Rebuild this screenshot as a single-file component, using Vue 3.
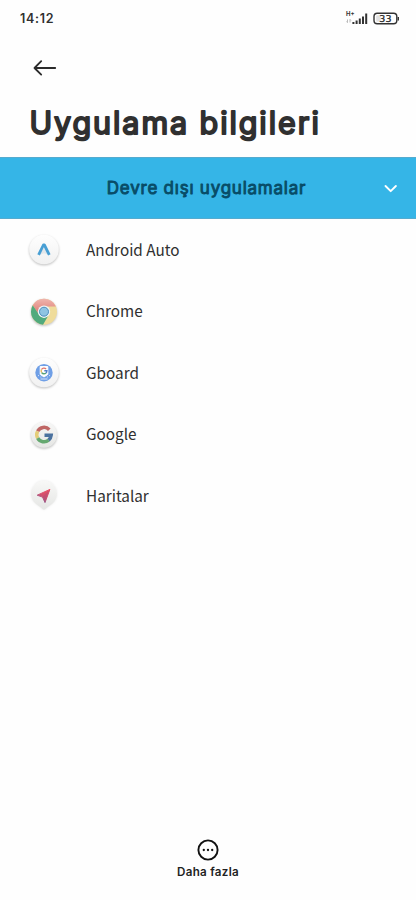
<script setup>
const apps = [
  { id: 'auto', name: 'Android Auto' },
  { id: 'chrome', name: 'Chrome' },
  { id: 'gboard', name: 'Gboard' },
  { id: 'google', name: 'Google' },
  { id: 'maps', name: 'Haritalar' },
]
</script>

<template>
  <div class="screen">
    <header class="status">
      <span class="time">14:12</span>
      <svg class="indicators" width="56" height="16" viewBox="0 0 56 16">
        <text x="2" y="5.8" class="net">H+</text>
        <path d="M3.5 9.5v3M2.5 11.5l1 1.2M6 12.5v-3M7 10.5l-1-1.2" stroke="#aaa" stroke-width=".8" fill="none" />
        <path d="M9.4 12v2M12.6 10.6v3.4M15.8 8.6V14M19 6.4V14M22.2 3.6V14" stroke="#333" stroke-width="2" stroke-linecap="butt" />
        <rect x="30" y="3.2" width="22.8" height="10.6" rx="3.2" fill="#fff" stroke="#333" stroke-width="1.4" />
        <rect x="32.2" y="5.2" width="4.5" height="6.6" rx="1" fill="#e2e2e2" />
        <path d="M54.3 7v3.4" stroke="#333" stroke-width="1.4" />
        <text x="41.4" y="11.9" text-anchor="middle" class="level">33</text>
      </svg>
    </header>

    <nav class="nav">
      <svg width="24" height="18" viewBox="0 0 24 18" fill="none" stroke="#2b2b2b" stroke-width="1.8" stroke-linecap="round" stroke-linejoin="round">
        <path d="M22.2 9H1.5M8.2 2.2L1.5 9l6.7 6.6" />
      </svg>
    </nav>

    <svg class="title" width="416" height="58" viewBox="0 0 416 58">
      <text x="29.4" y="35.4" textLength="289.5">Uygulama bilgileri</text>
    </svg>

    <div class="banner">
      <svg width="416" height="60" viewBox="0 0 416 60">
        <text x="106.8" y="36.4" textLength="198.6">Devre dışı uygulamalar</text>
        <path d="M385.5 28l5.2 5.2 5.2-5.2" fill="none" stroke="#fff" stroke-width="1.9" stroke-linecap="round" stroke-linejoin="round" />
      </svg>
    </div>

    <ul class="apps">
      <li v-for="app in apps" :key="app.id">
        <svg class="icon" width="36" height="36" viewBox="0 0 36 36">
          <defs>
            <linearGradient id="disc" x1="0" y1="0" x2="0" y2="1">
              <stop offset="0" stop-color="#fefefe" /><stop offset="1" stop-color="#f1f1f1" />
            </linearGradient>
            <linearGradient id="tile" x1="0" y1="0" x2="0" y2="1">
              <stop offset="0" stop-color="#f8f8f7" /><stop offset="1" stop-color="#e5e6e4" />
            </linearGradient>
            <linearGradient id="arrow" x1="1" y1="0" x2="0.3" y2="1">
              <stop offset="0" stop-color="#ed5064" /><stop offset=".6" stop-color="#d3506d" /><stop offset="1" stop-color="#7b68a4" />
            </linearGradient>
            <linearGradient id="red" x1="0" y1="0" x2="0" y2="1">
              <stop offset="0" stop-color="#efb5ae" /><stop offset="1" stop-color="#dc776f" />
            </linearGradient>
          </defs>
          <g v-if="app.id === 'auto'">
            <circle class="shadow" cx="18" cy="17.5" r="14.8" fill="url(#disc)" />
            <path d="M18 15.5l5 7.4-5-1.7-5 1.7z" fill="#e3e7ea" />
            <path d="M12.6 22.8L17.4 13h1l4.9 9.8" fill="none" stroke="#489fd4" stroke-width="2.8" stroke-linejoin="round" />
          </g>
          <g v-else-if="app.id === 'chrome'" class="shadow" transform="translate(0 .7)">
            <circle cx="18" cy="18" r="13" fill="#efdc9b" />
            <path d="M6.74 11.5A13 13 0 0 1 29.9 12.8H18a5.8 5.8 0 0 0-5 8.1z" fill="url(#red)" />
            <path d="M6.74 11.5A13 13 0 0 0 17 31l6-10.1a5.8 5.8 0 0 1-10 0z" fill="#51aa7d" />
            <circle cx="18" cy="18" r="6.2" fill="#edf4f6" />
            <circle cx="18" cy="18" r="4.5" fill="#8fc4e2" stroke="#3f83b6" stroke-width=".9" />
          </g>
          <g v-else-if="app.id === 'gboard'">
            <circle class="shadow" cx="18" cy="17.5" r="14.8" fill="url(#disc)" />
            <circle cx="18" cy="17.7" r="8.7" fill="#6f9fe6" />
            <path d="M14.2 11.6h7.6v7.8L18 22l-3.8-2.6z" fill="#fff" stroke="#fff" stroke-linejoin="round" />
            <g fill="none" stroke-width="1.4">
              <path d="M20.1 13.9a3 3 0 0 0-4.6.6" stroke="#df756d" />
              <path d="M15.5 14.5a3 3 0 0 0 .2 3.2" stroke="#e7b958" />
              <path d="M15.7 17.7a3 3 0 0 0 4.3.2" stroke="#59a477" />
              <path d="M20 17.9a3 3 0 0 0 .9-2.1h-2.6" stroke="#527fc7" />
            </g>
            <path d="M12 20.6h1M14.4 22h1M20.8 22h1M23 20.6h1M14.5 24h7" stroke="#d5e3fa" stroke-width="1" />
          </g>
          <g v-else-if="app.id === 'google'" transform="translate(0 .7)">
            <circle class="shadow" cx="18" cy="18" r="13" fill="url(#tile)" />
            <g fill="none" stroke-width="3.5">
              <path d="M23.3 13a7.2 7.2 0 0 0-11.7 1.6" stroke="#bf6664" />
              <path d="M11.6 14.6a7.2 7.2 0 0 0 .1 6.8" stroke="#e4cd78" />
              <path d="M11.7 21.4a7.2 7.2 0 0 0 10.9 2" stroke="#65a870" />
              <path d="M22.6 23.4a7.2 7.2 0 0 0 2.6-4.9H18.5" stroke="#4a719e" />
            </g>
          </g>
          <g v-else>
            <path class="soft" d="M18 31.8c-1.2 0-2-1.4-3.2-2.3-1.7-1.2-3.3-2.2-4.8-3.5A13 13 0 1 1 26 26c-1.5 1.3-3.1 2.3-4.8 3.5-1.2.9-2 2.3-3.2 2.3z" fill="url(#tile)" />
            <path d="M23.9 11.4L11.2 17.2l5.3 1.9 2.5 5.5z" fill="url(#arrow)" stroke="url(#arrow)" stroke-linejoin="round" />
            <path d="M23.9 11.4l-7.4 7.7 2.5 5.5z" fill="#a44f78" opacity=".4" />
          </g>
        </svg>
        <span>{{ app.name }}</span>
      </li>
    </ul>

    <footer class="more">
      <svg width="24" height="24" viewBox="0 0 24 24">
        <circle cx="12" cy="12" r="9.6" fill="none" stroke="#111" stroke-width="1.9" />
        <circle cx="7.8" cy="12" r="1.15" fill="#111" /><circle cx="12" cy="12" r="1.15" fill="#111" /><circle cx="16.2" cy="12" r="1.15" fill="#111" />
      </svg>
      <span>Daha fazla</span>
    </footer>
  </div>
</template>

<style>
body { margin: 0; background: #fefefe; }
</style>

<style scoped>
.screen { width: 416px; height: 900px; display: flex; flex-direction: column; overflow: hidden; background: #fefefe; color: #303030; font-family: "Noto Sans", sans-serif; }
.status { height: 37px; box-sizing: border-box; padding: 0 16px 0 20px; display: flex; align-items: center; justify-content: space-between; }
.time { font: 600 12.5px Inter, sans-serif; letter-spacing: .7px; }
.indicators { display: block; margin-bottom: 1px; }
.net { font: 700 6px Inter, sans-serif; fill: #333; }
.level { font: 500 9.5px "DejaVu Sans", sans-serif; fill: #222; stroke: #222; stroke-width: .25; }
.nav { height: 62px; box-sizing: border-box; padding: 22px 0 0 33px; }
.nav svg { display: block; }
.title { display: block; flex: none; }
.title text { font: 400 30.5px Inter, sans-serif; fill: #303030; stroke: #303030; stroke-width: 1.9; stroke-linejoin: round; }
.banner { height: 62px; box-sizing: border-box; background: #35b5e7; border-top: 1px solid #55abcf; border-bottom: 1px solid #55abcf; }
.banner svg { display: block; }
.banner text { font: 400 17px Inter, sans-serif; fill: #084c67; stroke: #084c67; stroke-width: .9; stroke-linejoin: round; }
.apps { list-style: none; margin: 0; padding: 0; flex: 1; }
.apps li { height: 61.5px; display: flex; align-items: center; gap: 24px; padding-left: 26px; box-sizing: border-box; font: 400 15.3px "Noto Sans CJK SC", sans-serif; color: #303030; }
.apps li span { padding-bottom: 2px; }
.icon { flex: none; overflow: visible; }
.shadow { filter: drop-shadow(0 1px 1px rgba(0, 0, 0, .25)); }
.soft { filter: drop-shadow(0 0 1px rgba(0, 0, 0, .08)); }
.more { height: 62px; display: flex; flex-direction: column; align-items: center; }
.more span { font: 600 11.6px Inter, sans-serif; line-height: 16px; margin-top: 2px; letter-spacing: .3px; color: #222; }
</style>
